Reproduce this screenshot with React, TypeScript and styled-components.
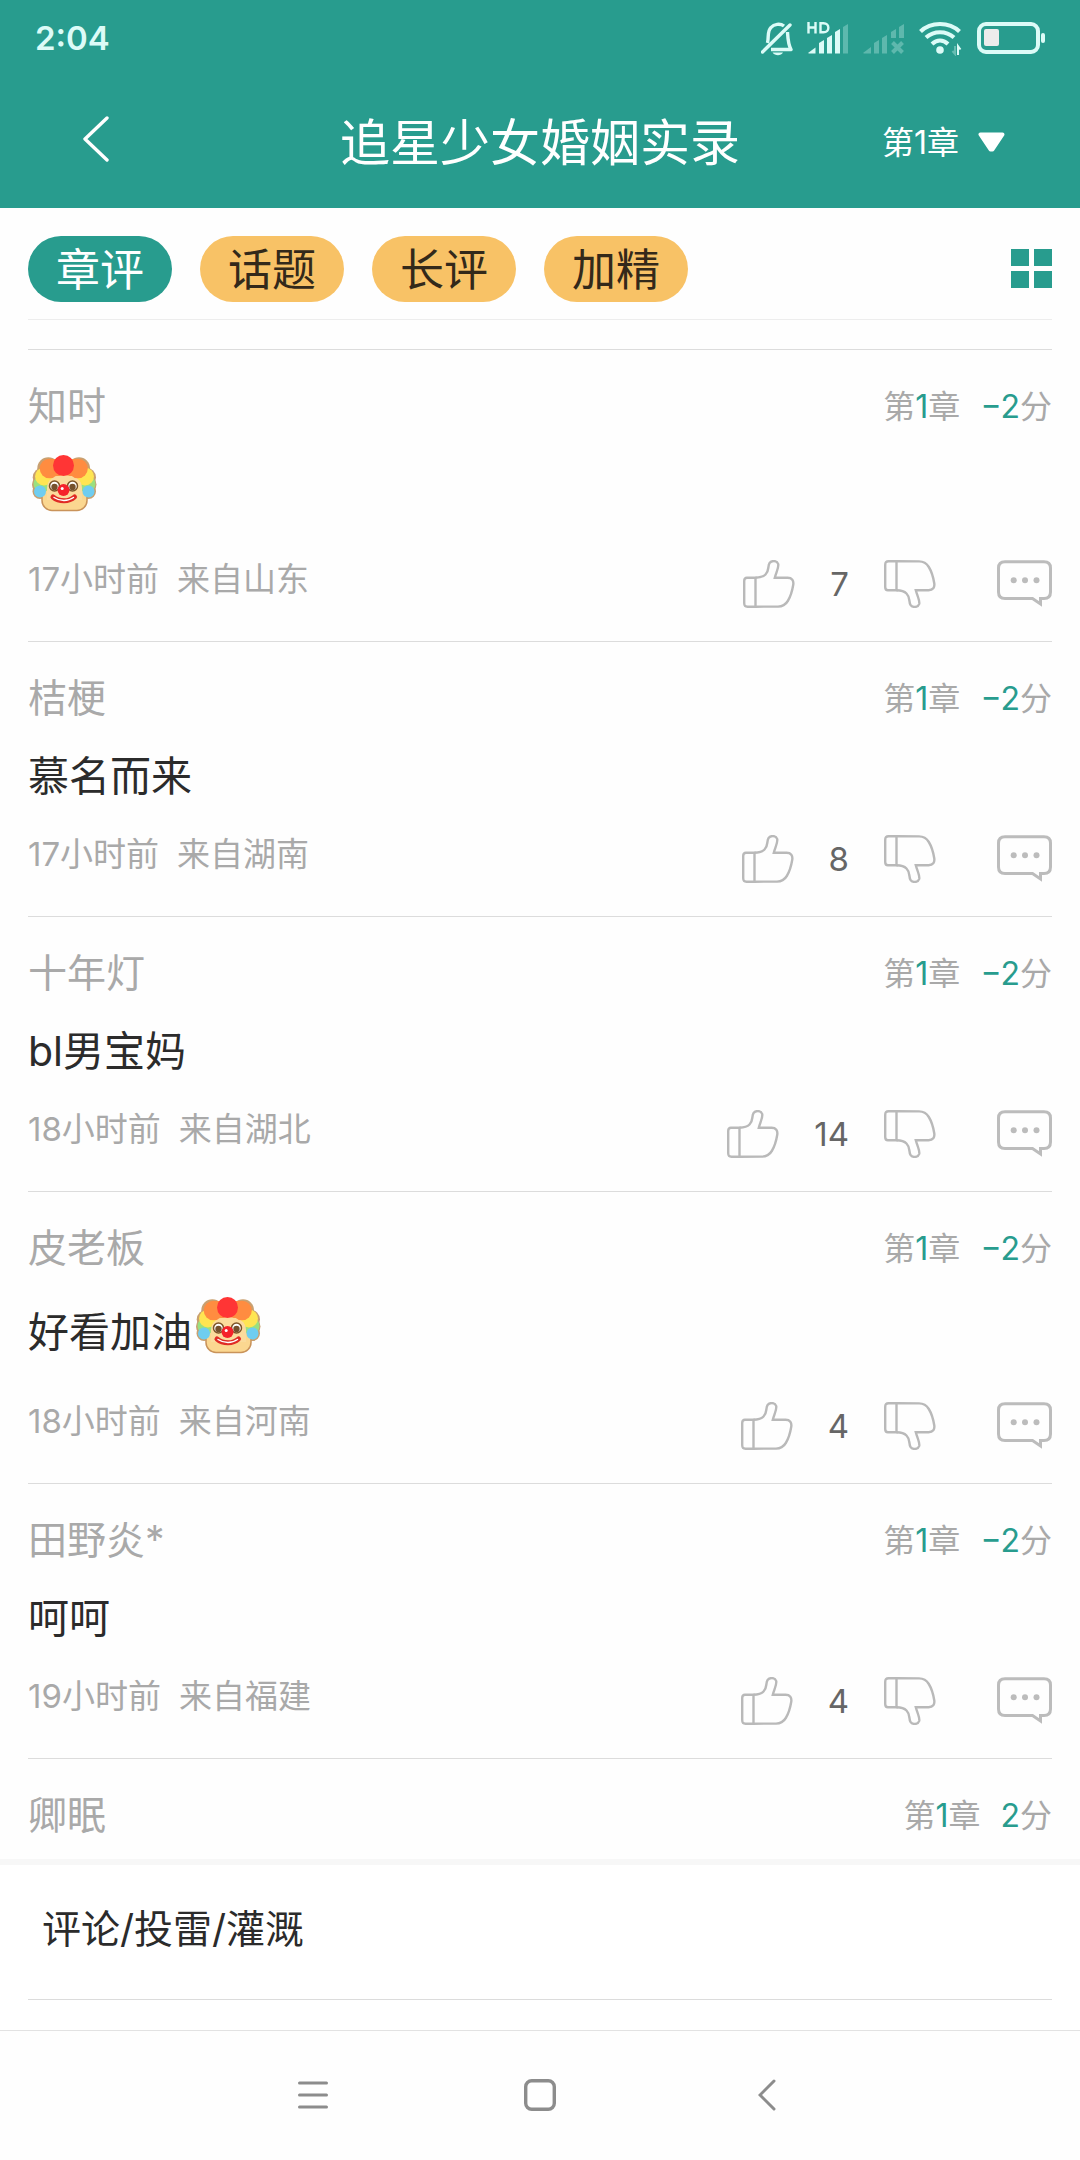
import React, { useState } from "react";
import styled, { createGlobalStyle } from "styled-components";

const GREEN = "#289c8e";
const GREY = "#a9a9a9";
const RULE = "#dcdcdc";
const ICE = "#dcfbf7";

const GlobalStyle = createGlobalStyle`
  *, *::before, *::after { box-sizing: border-box; }
  body {
    margin: 0;
    background: #fefefe;
    font-family: Inter, "Noto Sans CJK SC", sans-serif;
  }
  button, select {
    margin: 0;
    padding: 0;
    border: 0;
    background: none;
    color: inherit;
    font: inherit;
    cursor: pointer;
  }
  svg { display: block; flex: none; }
`;

const Screen = styled.div`
  display: flex;
  flex-direction: column;
  height: 100vh;
  overflow: hidden;
`;

const Top = styled.header`
  flex: none;
  background: ${GREEN};
  color: #fff;
`;

const StatusBar = styled.div`
  display: flex;
  justify-content: space-between;
  align-items: center;
  height: 76px;
  padding: 0 34px 0 35px;
`;

const Clock = styled.time`
  color: ${ICE};
  font-size: 33px;
  font-weight: 600;
  line-height: 40px;
`;

const StatusIcons = styled.div`
  display: flex;
  align-items: center;
  gap: 14px;
`;

const TitleBar = styled.div`
  display: grid;
  grid-template-columns: 1fr auto 1fr;
  align-items: center;
  height: 132px;
  padding: 2px 75px 0;
`;

const BackButton = styled.button`
  justify-self: start;
  padding: 0 8px 8px;
`;

const Title = styled.h1`
  margin: 0;
  font-size: 50px;
  font-weight: 400;
  line-height: 64px;
`;

const ChapterPicker = styled.label`
  display: flex;
  justify-self: end;
  align-items: center;
  gap: 18px;
`;

const ChapterSelect = styled.select`
  appearance: none;
  font-size: 32px;
  line-height: 40px;
  outline: none;
`;

const Filters = styled.nav`
  display: flex;
  flex: none;
  align-items: center;
  gap: 28px;
  height: 112px;
  margin: 0 28px;
  padding-top: 11px;
  padding-bottom: 1px;
  border-bottom: 1px solid #ededed;
`;

const Pill = styled.button<{ $active: boolean }>`
  width: 144px;
  height: 66px;
  padding-top: 2px;
  border-radius: 33px;
  background: ${(p) => (p.$active ? GREEN : "#f8c266")};
  color: ${(p) => (p.$active ? "#fff" : "#33291a")};
  font-size: 44px;
  line-height: 64px;
`;

const GridButton = styled.button`
  display: grid;
  grid-template-columns: 18px 18px;
  gap: 5px;
  margin-left: auto;
`;

const GridCell = styled.span`
  height: 17px;
  background: ${GREEN};
`;

const List = styled.main`
  flex: 1;
  min-height: 0;
  margin-top: 29px;
  padding: 0 28px;
  overflow: hidden;
`;

const Row = styled.article`
  padding: 27px 0 33px;
  border-top: 1px solid ${RULE};
`;

const RowHead = styled.div`
  display: flex;
  justify-content: space-between;
  align-items: center;
  height: 58px;
  color: ${GREY};
`;

const Author = styled.span`
  font-size: 39px;
  line-height: 58px;
`;

const Rating = styled.span`
  display: flex;
  gap: 20px;
  padding-top: 2px;
  font-size: 32px;
  line-height: 58px;
`;

const Accent = styled.b`
  color: ${GREEN};
  font-weight: 400;
`;

const Body = styled.p`
  margin: 19px 0 29px;
  color: #2b2b2b;
  font-size: 41px;
  line-height: 60px;
`;

const Sticker = styled.svg`
  display: inline-block;
  vertical-align: -26px;
`;

const RowFoot = styled.div`
  display: flex;
  align-items: flex-start;
  height: 48px;
`;

const Origin = styled.div`
  display: flex;
  gap: 18px;
  margin-right: auto;
  color: ${GREY};
  font-size: 33px;
  line-height: 38px;
`;

const Vote = styled.button`
  display: flex;
  align-items: center;
  gap: 35px;
  color: #666;
  font-size: 33px;
  line-height: 48px;
`;

const Dislike = styled.button`
  margin: 0 61px 0 35px;
`;

const Composer = styled.footer`
  flex: none;
  padding: 0 28px 30px;
  border-top: 6px solid #f7f7f7;
  background: #fff;
`;

const ComposeButton = styled.button`
  display: block;
  width: 100%;
  padding: 32px 14px 38px;
  border-bottom: 1px solid ${RULE};
  color: #2b2b2b;
  font-size: 39px;
  line-height: 64px;
  text-align: left;
`;

const SystemNav = styled.nav`
  flex: none;
  height: 130px;
  padding-bottom: 2px;
  border-top: 1px solid #e2e2e2;
`;

const SystemKeys = styled.div`
  display: grid;
  grid-template-columns: repeat(3, 1fr);
  place-items: center;
  width: 63%;
  height: 100%;
  margin: 0 auto;
`;

const BellOff = () => (
  <svg width="32" height="36" viewBox="1 0 32 36" fill="none" stroke={ICE} strokeWidth="3.4">
    <path d="M2.500 32 L30 5" strokeLinecap="round" />
    <path d="M7.500 23 C9 17 7 11 11 7.500 C14 4 20 3 24 6" />
    <path d="M27.500 12 C28 20 28 24 31 29.500 H11" strokeLinejoin="round" />
    <path d="M12.500 32.500 H23 C21 36 15 36 12.500 32.500Z" fill={ICE} stroke="none" />
  </svg>
);

const SignalHd = () => (
  <svg width="42" height="36" viewBox="0 0 42 36" fill={ICE}>
    <g fill="none" stroke={ICE} strokeWidth="2.400">
      <path d="M1.500 2 V13.500 M8.500 2 V13.500 M1.500 7.500 H8.500" />
      <path d="M13.500 3.200 H16.500 C23 3.200 23 12.300 16.500 12.300 H13.500Z" />
    </g>
    <path d="M1 33 L8.500 27.500 V33.500 H2Z" />
    <path d="M12 23 L17 20 V33.500 H12Z" />
    <path d="M20 18 L25 15 V33.500 H20Z" />
    <path d="M28 12 L33 9 V33.500 H28Z" />
    <path d="M36 7 L41 4 V33.500 H36Z" opacity="0.3" />
  </svg>
);

const SignalNone = () => (
  <svg width="42" height="36" viewBox="0 0 42 36" fill={ICE} opacity="0.3">
    <path d="M0 33 L8 27 V33.500 H1Z" />
    <path d="M11 23 L16 20 V33.500 H11Z" />
    <path d="M19 18 L24 15 V33.500 H19Z" />
    <path d="M28 12 L33 9 V18 H28Z" />
    <path d="M36 7 L41 4 V18 H36Z" />
    <path d="M29.500 22.500 L39.500 32.500 M39.500 22.500 L29.500 32.500" stroke={ICE} strokeWidth="4" />
  </svg>
);

const Wifi = () => (
  <svg width="44" height="36" viewBox="0 0 44 36" fill="none" stroke={ICE} strokeWidth="4.2">
    <path d="M1.500 11.500 C12 1.500 30 1.500 40.500 11.500" />
    <path d="M7 17.500 C15 10.500 27 10.500 35 17.500" />
    <path d="M13 24 C18 19.500 24 19.500 29 24" />
    <circle cx="21" cy="30" r="3.800" fill={ICE} stroke="none" />
    <path d="M39 35 V26 L41.500 29.500" strokeWidth="2" />
    <path d="M36 26 V34 L33.500 31" strokeWidth="2" opacity="0.35" />
  </svg>
);

const Battery = () => (
  <svg width="69" height="32" viewBox="0 0 69 32" fill="none">
    <rect x="2" y="2" width="59" height="28" rx="7" stroke={ICE} strokeWidth="4" />
    <rect x="7" y="7" width="15" height="17" rx="2" fill="#ececec" />
    <rect x="64" y="11" width="4" height="10" rx="2" fill={ICE} />
  </svg>
);

const Clown = () => (
  <Sticker width="72" height="77" viewBox="0 0 72 77" role="img" aria-label="小丑">
    <g fill="#c9a070">
      <circle cx="20.300" cy="14.300" r="11" />
      <circle cx="51" cy="14.300" r="11" />
      <circle cx="14.700" cy="23.500" r="10" />
      <circle cx="58" cy="23.500" r="10" />
      <circle cx="12.500" cy="30.500" r="8.500" />
      <circle cx="60" cy="30.500" r="8.500" />
      <circle cx="12" cy="37.500" r="7.500" />
      <circle cx="60.500" cy="37.500" r="7.500" />
    </g>
    <rect x="14" y="21" width="45" height="35.500" rx="10" fill="#fbd790" stroke="#c9935a" strokeWidth="1.500" />
    <g fill="#9be07f">
      <circle cx="14" cy="30" r="8.500" />
      <circle cx="59" cy="30" r="8.500" />
    </g>
    <g fill="#ffe552">
      <circle cx="16" cy="22.500" r="9" />
      <circle cx="57" cy="22.500" r="9" />
    </g>
    <g fill="#6fcdf0">
      <circle cx="12" cy="37.500" r="6" />
      <circle cx="60.500" cy="37.500" r="6" />
    </g>
    <path d="M19 46 V34 C19 26 26 21 36.500 21 C47 21 54 26 54 34 V46Z" fill="#fbdb9c" />
    <g fill="#ff8c40">
      <circle cx="21.500" cy="14.500" r="9.800" />
      <circle cx="50" cy="14.500" r="9.800" />
      <rect x="22" y="5" width="27" height="17" />
    </g>
    <path d="M26 26 C28 19.500 45 19.500 47 26Z" fill="#fbdb9c" />
    <circle cx="35.500" cy="11.500" r="10.500" fill="#ff3535" />
    <g fill="#fff" stroke="#7d5427" strokeWidth="1.500">
      <circle cx="26.500" cy="32" r="5" />
      <circle cx="44.500" cy="32" r="5" />
    </g>
    <circle cx="26.500" cy="33" r="3.200" fill="#75512c" />
    <circle cx="44.500" cy="33" r="3.200" fill="#75512c" />
    <circle cx="35.500" cy="36" r="6" fill="#f5222a" />
    <circle cx="34.200" cy="34.500" r="1.500" fill="#fff" />
    <path d="M25 43 C31 48 41 48 46.500 43" fill="none" stroke="#e02b25" strokeWidth="5" strokeLinecap="round" />
    <path d="M26 43.500 C32 47.500 40 47.500 45.500 43.500" fill="none" stroke="#fff" strokeWidth="1.400" strokeLinecap="round" />
  </Sticker>
);

const thumbBase =
  "M12.500 17.700 H4 C2 17.700 1.200 18.700 1.200 21 V43 C1.200 45.800 2 46.700 4.500 46.700 H12.500Z";
const thumbHand =
  "M12.500 17.700 C18 17.500 20.500 16.500 22.500 14.500 C26.500 10.500 24.500 6.500 26.500 3.200 C28.500 0.200 34 0.300 35.200 4 C36 7.500 33 13 31.800 17.700 H44.500 C49 17.700 51 20.500 50.200 25 C49.200 31 47.300 37 44.800 41 C42.500 44.800 39.500 46.600 35 46.600 L12.500 46.700";

const ThumbUp = () => (
  <svg width="52" height="48" viewBox="0 0 52 48" fill="none" stroke="#b9b9b9" strokeWidth="2.4">
    <path d={thumbBase} />
    <path d={thumbHand} />
  </svg>
);

const ThumbDown = () => (
  <svg width="52" height="48" viewBox="0 0 52 48" fill="none" stroke="#b9b9b9" strokeWidth="2.4">
    <g transform="matrix(1 0 0 -1 0 48)">
      <path d={thumbBase} />
      <path d={thumbHand} />
    </g>
  </svg>
);

const Bubble = () => (
  <svg width="55" height="48" viewBox="0 0 55 48" fill="none" stroke="#bcbcbc" strokeWidth="3">
    <path d="M8 1.700 H47 C51.500 1.700 53.500 4 53.500 8 V32 C53.500 36.500 51.500 38.500 47 38.500 H43.500 V44 L35.500 38.500 H8 C3.500 38.500 1.500 36.500 1.500 32 V8 C1.500 4 3.500 1.700 8 1.700Z" />
    <g fill="#bcbcbc" stroke="none">
      <circle cx="16.700" cy="20.200" r="3" />
      <circle cx="28" cy="20.200" r="3" />
      <circle cx="39.500" cy="20.200" r="3" />
    </g>
  </svg>
);

interface Comment {
  author: string;
  score: string;
  text?: string;
  clown?: boolean;
  time?: string;
  place?: string;
  likes?: number;
}

const comments: Comment[] = [
  { author: "知时", score: "−2", clown: true, time: "17小时前", place: "山东", likes: 7 },
  { author: "桔梗", score: "−2", text: "慕名而来", time: "17小时前", place: "湖南", likes: 8 },
  { author: "十年灯", score: "−2", text: "bl男宝妈", time: "18小时前", place: "湖北", likes: 14 },
  { author: "皮老板", score: "−2", text: "好看加油", clown: true, time: "18小时前", place: "河南", likes: 4 },
  { author: "田野炎*", score: "−2", text: "呵呵", time: "19小时前", place: "福建", likes: 4 },
  { author: "卿眠", score: "2" },
];

const CommentRow = ({ author, score, text, clown, time, place, likes }: Comment) => (
  <Row>
    <RowHead>
      <Author>{author}</Author>
      <Rating>
        <span>第<Accent>1</Accent>章</span>
        <span><Accent>{score}</Accent>分</span>
      </Rating>
    </RowHead>
    {time && (
      <>
        <Body>
          {text}
          {clown && <Clown />}
        </Body>
        <RowFoot>
          <Origin>
            <span>{time}</span>
            <span>来自{place}</span>
          </Origin>
          <Vote type="button" aria-label={`赞 ${likes}`}>
            <ThumbUp />
            {likes}
          </Vote>
          <Dislike type="button" aria-label="踩"><ThumbDown /></Dislike>
          <button type="button" aria-label="回复"><Bubble /></button>
        </RowFoot>
      </>
    )}
  </Row>
);

const filters = ["章评", "话题", "长评", "加精"];

export default function App() {
  const [active, setActive] = useState(filters[0]);
  return (
    <Screen>
      <GlobalStyle />
      <Top>
        <StatusBar>
          <Clock>2:04</Clock>
          <StatusIcons>
            <BellOff />
            <SignalHd />
            <SignalNone />
            <Wifi />
            <Battery />
          </StatusIcons>
        </StatusBar>
        <TitleBar>
          <BackButton type="button" aria-label="返回">
            <svg width="26" height="46" viewBox="0 0 26 46" fill="none" stroke="#fff" strokeWidth="3.4" strokeLinecap="round" strokeLinejoin="round">
              <path d="M24 2 L2 23 L24 44" />
            </svg>
          </BackButton>
          <Title>追星少女婚姻实录</Title>
          <ChapterPicker>
            <ChapterSelect aria-label="章节">
              <option>第1章</option>
            </ChapterSelect>
            <svg width="27" height="22" viewBox="0 0 27 22" fill="#fff" stroke="#fff" strokeWidth="4" strokeLinejoin="round">
              <path d="M2.500 2.500 H24.500 L14.500 17.500 H12.500Z" />
            </svg>
          </ChapterPicker>
        </TitleBar>
      </Top>
      <Filters>
        {filters.map((name) => (
          <Pill key={name} type="button" $active={name === active} onClick={() => setActive(name)}>
            {name}
          </Pill>
        ))}
        <GridButton type="button" aria-label="更多">
          <GridCell />
          <GridCell />
          <GridCell />
          <GridCell />
        </GridButton>
      </Filters>
      <List>
        {comments.map((c) => (
          <CommentRow key={c.author} {...c} />
        ))}
      </List>
      <Composer>
        <ComposeButton type="button">评论/投雷/灌溉</ComposeButton>
      </Composer>
      <SystemNav>
        <SystemKeys>
          <button type="button" aria-label="菜单">
            <svg width="30" height="32" viewBox="0 0 30 32" stroke="#8c8c8c" strokeWidth="3" strokeLinecap="round">
              <path d="M1.500 4 H28.500 M1.500 16 H28.500 M1.500 28 H28.500" />
            </svg>
          </button>
          <button type="button" aria-label="主页">
            <svg width="32" height="32" viewBox="0 0 32 32" fill="none" stroke="#8c8c8c" strokeWidth="3.4">
              <rect x="1.700" y="1.700" width="28.600" height="28.600" rx="6" />
            </svg>
          </button>
          <button type="button" aria-label="后退">
            <svg width="18" height="32" viewBox="0 0 18 32" fill="none" stroke="#8c8c8c" strokeWidth="3" strokeLinecap="round">
              <path d="M16 2 L2 16 L16 30" />
            </svg>
          </button>
        </SystemKeys>
      </SystemNav>
    </Screen>
  );
}
